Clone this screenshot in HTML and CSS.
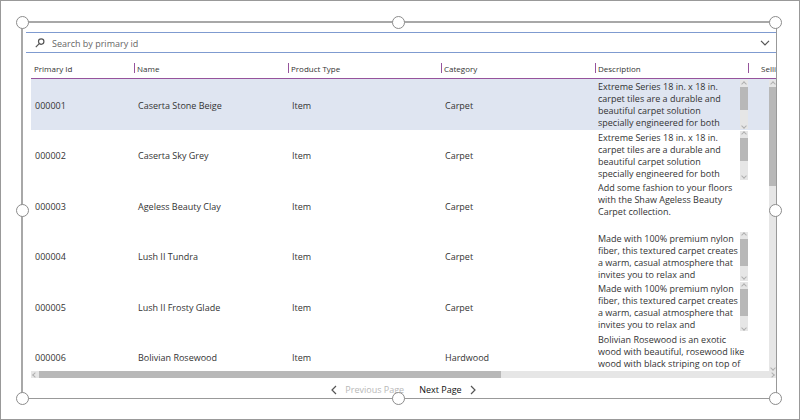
FILE: index.html
```html
<!DOCTYPE html>
<html lang="en">
<head>
<meta charset="utf-8">
<title>Products</title>
<link rel="stylesheet" href="styles.css">
</head>
<body>
<main class="frame">
  <form class="search">
    <svg class="search-icon" viewBox="0 0 10 10" aria-hidden="true"><circle cx="6.2" cy="3.6" r="2.7"/><path d="M4.2 5.6L.8 9.2"/></svg>
    <input class="search-input" type="text" placeholder="Search by primary id" aria-label="Search by primary id">
    <button class="search-toggle" type="button" aria-label="Expand">
      <svg viewBox="0 0 10 6" aria-hidden="true"><path d="M1 .8L5 4.8L9 .8"/></svg>
    </button>
  </form>

  <section class="grid">
    <div class="viewport">
      <table>
        <colgroup><col class="c-id"><col class="c-wide"><col class="c-col"><col class="c-wide"><col class="c-col"><col></colgroup>
        <thead>
          <tr><th>Primary Id</th><th>Name</th><th>Product Type</th><th>Category</th><th>Description</th><th class="th-last">Selling</th></tr>
        </thead>
        <tbody>
          <tr class="selected"><td>000001</td><td>Caserta Stone Beige</td><td>Item</td><td>Carpet</td>
            <td class="desc"><div class="desc-box"><p>Extreme Series 18 in. x 18 in. carpet tiles are a durable and beautiful carpet solution<br>specially engineered for both</p><div class="bar bar-v bar-cell"><i class="arrow up"></i><span class="thumb thumb-s"></span><i class="arrow down"></i></div></div></td><td></td></tr>
          <tr><td>000002</td><td>Caserta Sky Grey</td><td>Item</td><td>Carpet</td>
            <td class="desc"><div class="desc-box"><p>Extreme Series 18 in. x 18 in. carpet tiles are a durable and beautiful carpet solution<br>specially engineered for both</p><div class="bar bar-v bar-cell"><i class="arrow up"></i><span class="thumb thumb-s"></span><i class="arrow down"></i></div></div></td><td></td></tr>
          <tr><td>000003</td><td>Ageless Beauty Clay</td><td>Item</td><td>Carpet</td>
            <td class="desc"><div class="desc-box"><p>Add some fashion to your floors with the Shaw Ageless Beauty Carpet collection.</p></div></td><td></td></tr>
          <tr><td>000004</td><td>Lush II Tundra</td><td>Item</td><td>Carpet</td>
            <td class="desc"><div class="desc-box"><p>Made with 100% premium nylon fiber, this textured carpet creates a warm, casual atmosphere that invites you to relax and</p><div class="bar bar-v bar-cell"><i class="arrow up"></i><span class="thumb thumb-m"></span><i class="arrow down"></i></div></div></td><td></td></tr>
          <tr><td>000005</td><td>Lush II Frosty Glade</td><td>Item</td><td>Carpet</td>
            <td class="desc"><div class="desc-box"><p>Made with 100% premium nylon fiber, this textured carpet creates a warm, casual atmosphere that invites you to relax and</p><div class="bar bar-v bar-cell"><i class="arrow up"></i><span class="thumb thumb-m"></span><i class="arrow down"></i></div></div></td><td></td></tr>
          <tr><td>000006</td><td>Bolivian Rosewood</td><td>Item</td><td>Hardwood</td>
            <td class="desc"><div class="desc-box"><p>Bolivian Rosewood is an exotic<br>wood with beautiful, rosewood like<br>wood with black striping on top of</p></div></td><td></td></tr>
        </tbody>
      </table>
      <div class="bar bar-v bar-main"><i class="arrow up"></i><span class="thumb thumb-l"></span><i class="arrow down"></i></div>
    </div>
    <div class="bar bar-h"><i class="arrow left"></i><span class="thumb thumb-w"></span><i class="arrow right"></i></div>
    <nav class="pager">
      <button type="button" disabled><svg viewBox="0 0 6 10" aria-hidden="true"><path d="M5 1L1 5L5 9"/></svg>Previous Page</button>
      <button type="button">Next Page<svg viewBox="0 0 6 10" aria-hidden="true"><path d="M1 1L5 5L1 9"/></svg></button>
    </nav>
  </section>

  <span class="handle t l"></span><span class="handle t c"></span><span class="handle t r"></span>
  <span class="handle m l"></span><span class="handle m r"></span>
  <span class="handle b l"></span><span class="handle b c"></span><span class="handle b r"></span>
</main>
</body>
</html>
```
FILE: styles.css
```css
* { box-sizing: border-box; }

body {
  margin: 0;
  height: 100vh;
  padding: 20px 22px 20px 20px;
  border: 1px solid #999;
  display: flex;
  background: #fff;
  color: #333;
  font: 9px/12px "Open Sans", sans-serif;
}

button {
  border: 0;
  padding: 0;
  background: none;
  color: inherit;
  font: inherit;
}

svg {
  fill: none;
  stroke: #555;
  stroke-width: 1.2;
}

.frame {
  position: relative;
  flex: 1;
  min-width: 0;
  display: flex;
  flex-direction: column;
  padding: 9px 0 0 3px;
  border: 1px solid #999;
  border-width: 2px 1px 1px 2px;
  border-color: #a8a8a8 #999 #999 #a8a8a8;
}

.search {
  flex: none;
  height: 21px;
  display: flex;
  align-items: center;
  gap: 7px;
  padding: 0 6px 0 9px;
  border: 1px solid #7f9bd0;
  border-width: 1px 0;
}
.search-icon { width: 10px; height: 10px; }
.search-input {
  flex: 1;
  min-width: 0;
  border: 0;
  padding: 2px 0 0;
  outline: 0;
  background: none;
  font: inherit;
}
.search-input::placeholder { color: #666; opacity: 1; }
.search-toggle { display: flex; }
.search-toggle svg { width: 10px; height: 6px; }

.grid {
  flex: 1;
  min-height: 0;
  display: flex;
  flex-direction: column;
  padding-left: 5px;
}
.viewport {
  position: relative;
  flex: 1;
  min-height: 0;
  overflow: hidden;
}

table {
  width: 100%;
  height: 329px;
  table-layout: fixed;
  border-collapse: separate;
  border-spacing: 0;
}
.c-id { width: 103px; }
.c-wide { width: 154px; }
.c-col { width: 153px; }
th {
  position: relative;
  height: 26px;
  padding: 6px 0 0 3px;
  border-bottom: 1px solid #96539c;
  text-align: left;
  font-size: 8px;
  font-weight: 400;
  white-space: nowrap;
}
th + th::before {
  content: "";
  position: absolute;
  left: 0;
  top: 10px;
  width: 1px;
  height: 10px;
  background: #96539c;
}
.th-last { padding-left: 13px; }
td { padding: 3px 0 0 4px; vertical-align: middle; }
.selected { background: #dfe5f1; }
.desc { padding: 1px 0 0 3px; vertical-align: top; }
.desc-box {
  height: 49px;
  display: flex;
  justify-content: space-between;
  overflow: hidden;
}
.desc-box p { width: 148px; margin: 1px 0 0; }
.desc-box p:not(:last-child) { width: 142px; }

.bar { display: flex; background: #e6e6e6; }
.bar-v { flex-direction: column; width: 8px; }
.bar-cell { flex: none; }
.bar-main { position: absolute; top: 27px; right: 0; bottom: 0; width: 7px; }
.bar-h { flex: none; height: 7px; }
.thumb { flex: none; background: #b8b8b8; }
.thumb-s { height: 23px; }
.thumb-m { height: 27px; }
.thumb-l { height: 99px; }
.thumb-w { width: 62%; }
.arrow {
  flex: none;
  width: 8px;
  height: 7px;
  display: flex;
  align-items: center;
  justify-content: center;
}
.bar-main .arrow { width: 7px; }
.arrow::before {
  content: "";
  width: 3px;
  height: 3px;
  border: 1px solid #b0b0b0;
  border-width: 1px 0 0 1px;
}
.up::before { transform: rotate(45deg); }
.down::before { transform: rotate(225deg); }
.left::before { transform: rotate(315deg); }
.right::before { transform: rotate(135deg); }
.down { margin-top: auto; }
.right { margin-left: auto; }

.pager {
  flex: none;
  height: 20px;
  display: flex;
  align-items: center;
  justify-content: center;
  gap: 15px;
  padding-top: 4px;
}
.pager button { display: flex; align-items: center; gap: 8px; color: #111; }
.pager button:disabled { color: #b8b8b8; }
.pager svg { width: 6px; height: 10px; }

.handle {
  position: absolute;
  width: 13px;
  height: 13px;
  border: 1px solid #8c8c8c;
  border-radius: 50%;
  background: #fff;
}
.t { top: -7px; }
.m { top: calc(50% - 7px); }
.b { bottom: -7px; }
.l { left: -7px; }
.c { left: calc(50% - 8px); }
.r { right: -6px; }
```
